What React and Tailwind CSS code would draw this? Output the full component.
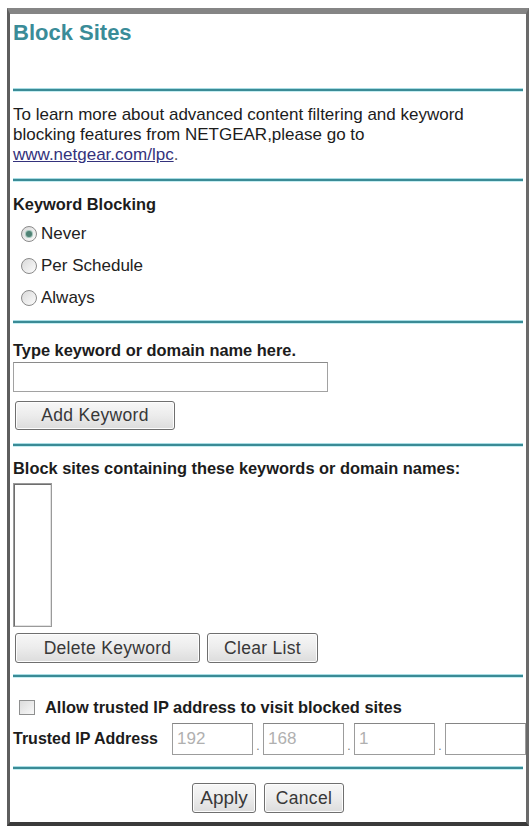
import React from "react";

function Hr({ className = "" }) {
  return (
    <div className={"flex flex-col w-full " + className}>
      <div className="h-px bg-[#a9dde4]" />
      <div className="h-[2px] bg-[#3b8b96]" />
      <div className="h-px bg-[#c6eef2]" />
    </div>
  );
}

function Radio({ checked, label }) {
  return (
    <div className="flex items-center h-[32px]">
      <div className="ml-[8px] w-[16px] h-[16px] rounded-full border border-[#8a8a8a] bg-linear-to-br from-[#d9d9d9] to-[#fcfcfc] flex items-center justify-center">
        {checked && <div className="w-[6px] h-[6px] rounded-full bg-[#4f8174] shadow-[0_0_0_1px_#a6c7bd]" />}
      </div>
      <span className="ml-[4px] text-[17px] leading-[20px] text-[#222]">{label}</span>
    </div>
  );
}

function Btn({ className = "", children }) {
  return (
    <div
      className={
        "flex items-center justify-center rounded-[3px] border border-[#6f6f6f] bg-linear-to-b from-[#f7f7f7] via-[#ececec] to-[#dcdcdc] shadow-[inset_0_0_0_1px_#fdfdfd] text-[17.5px] text-[#383838] tracking-[0.3px] " +
        className
      }
    >
      {children}
    </div>
  );
}

function IpBox({ value }) {
  return (
    <div className="w-[81px] h-[32px] shrink-0 border border-[#9c9c9c] border-t-[#858585] bg-white flex items-center pl-[4px] text-[17px] text-[#b0b0b0]">
      {value}
    </div>
  );
}

function Dot() {
  return (
    <div className="w-[10px] h-[32px] shrink-0 flex items-end justify-center pb-[3px] text-[12px] leading-[12px] text-[#777]">.</div>
  );
}

export default function App() {
  return (
    <div className="w-[531px] h-[826px] bg-white overflow-hidden font-['Liberation_Sans',Arial,sans-serif] text-[#1c1c1c]">
      <div className="ml-[7px] mt-[8px] w-[522px] h-[818px] border-t-[6px] border-l-[3px] border-r-[3px] border-b-[4px] border-t-[#858585] border-l-[#5e5e5e] border-r-[#6a6a6a] border-b-[#3a3a3a] overflow-hidden px-[3px] flex flex-col">
        <div className="h-[74px] pt-[6px] shrink-0">
          <div className="text-[22px] leading-[26px] font-bold text-[#3a8c98]">Block Sites</div>
        </div>
        <Hr />
        <p className="mt-[13px] text-[17px] leading-[20px]">
          To learn more about advanced content filtering and keyword blocking features from NETGEAR,please go to{" "}
          <br />
          <span className="underline text-[#34327c]">www.netgear.com/lpc</span>
          <span className="text-[#555]">.</span>
        </p>
        <Hr className="mt-[13px]" />
        <div className="mt-[12px] text-[16.4px] leading-[20px] font-bold">Keyword Blocking</div>
        <div className="mt-[4px] flex flex-col">
          <Radio checked label="Never" />
          <Radio label="Per Schedule" />
          <Radio label="Always" />
        </div>
        <Hr className="mt-[6px]" />
        <div className="mt-[16px] text-[16.4px] leading-[20px] font-bold">Type keyword or domain name here.</div>
        <div className="mt-[2px] w-[315px] h-[30px] border border-[#a2a2a2] border-t-[#8a8a8a] bg-white" />
        <Btn className="mt-[9px] ml-[2px] w-[160px] h-[29px]">Add Keyword</Btn>
        <Hr className="mt-[13px]" />
        <div className="mt-[11px] text-[16.4px] leading-[20px] font-bold whitespace-nowrap">
          Block sites containing these keywords or domain names:
        </div>
        <div className="mt-[5px] w-[39px] h-[144px] border border-[#9a9a9a] shadow-[inset_1px_1px_0_#6e6e6e,inset_-1px_-1px_0_#e2e2e2] bg-white" />
        <div className="mt-[6px] ml-[2px] flex gap-[7px]">
          <Btn className="w-[185px] h-[30px]">Delete Keyword</Btn>
          <Btn className="w-[111px] h-[30px]">Clear List</Btn>
        </div>
        <Hr className="mt-[11px]" />
        <div className="mt-[19px] h-[20px] flex items-center">
          <div className="ml-[6px] w-[16px] h-[15px] border border-[#8e8f8f] bg-linear-to-br from-[#dcdcdc] to-[#f8f8f8]" />
          <span className="ml-[10px] text-[16.4px] leading-[20px] font-bold whitespace-nowrap">
            Allow trusted IP address to visit blocked sites
          </span>
        </div>
        <div className="mt-[6px] h-[32px] flex items-center">
          <span className="w-[159px] shrink-0 text-[16px] leading-[20px] font-bold whitespace-nowrap">
            Trusted IP Address
          </span>
          <IpBox value="192" />
          <Dot />
          <IpBox value="168" />
          <Dot />
          <IpBox value="1" />
          <Dot />
          <IpBox value="" />
        </div>
        <Hr className="mt-[11px]" />
        <div className="mt-[13px] flex justify-center gap-[8px]">
          <Btn className="w-[64px] h-[30px] text-[19px] tracking-normal">Apply</Btn>
          <Btn className="w-[80px] h-[30px]">Cancel</Btn>
        </div>
      </div>
    </div>
  );
}
